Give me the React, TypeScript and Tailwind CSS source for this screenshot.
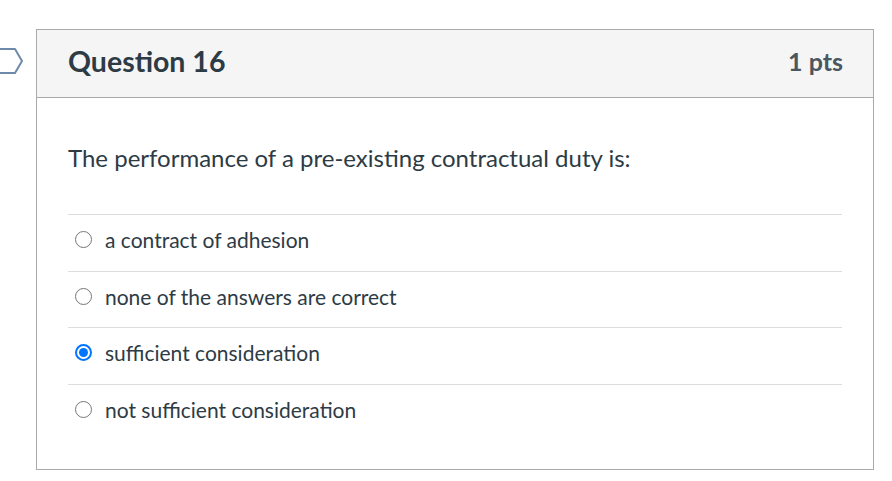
import React from "react";

const answers = [
  { text: "a contract of adhesion", selected: false },
  { text: "none of the answers are correct", selected: false },
  { text: "sufficient consideration", selected: true },
  { text: "not sufficient consideration", selected: false },
];

function Radio({ checked }: { checked: boolean }) {
  return checked ? (
    <span className="flex h-[17px] w-[17px] shrink-0 items-center justify-center rounded-full border-[2px] border-[#0075ff] bg-white">
      <span className="h-[9px] w-[9px] rounded-full bg-[#0075ff]" />
    </span>
  ) : (
    <span className="h-[17px] w-[17px] shrink-0 rounded-full border-[1.5px] border-[#767676] bg-white" />
  );
}

export default function App() {
  return (
    <div className="flex min-h-[481px] bg-white pt-[29px] text-[#2d3b45]" style={{ fontFamily: "Lato, 'Open Sans', sans-serif" }}>
      <div className="w-[36px] shrink-0 pt-[18px]">
        <svg width="26" height="28" viewBox="0 0 26 28" fill="none">
          <path d="M-4 2 H15 L22 14 L15 26 H-4" stroke="#6d8aa8" strokeWidth="2" strokeLinejoin="round" />
        </svg>
      </div>
      <div className="h-[441px] w-[838px] border border-[#aaaaaa]">
        <div className="flex h-[68px] items-center justify-between border-b border-[#aaaaaa] bg-[#f5f5f5] pb-[4px] pl-[31px] pr-[30px]">
          <h2 className="text-[28.5px] font-bold">Question 16</h2>
          <span className="text-[25px] font-bold text-[#4a5660]">1 pts</span>
        </div>
        <div className="px-[31px] pt-[45px]">
          <p className="text-[24px] leading-[30px]">The performance of a pre-existing contractual duty is:</p>
          <div className="mt-[41px]">
            {answers.map((a) => (
              <div key={a.text} className="flex h-[56.5px] items-center gap-[13px] border-t border-[#dddddd] pb-[6px] pl-[7px]">
                <Radio checked={a.selected} />
                <span className="text-[21px]">{a.text}</span>
              </div>
            ))}
          </div>
        </div>
      </div>
    </div>
  );
}
